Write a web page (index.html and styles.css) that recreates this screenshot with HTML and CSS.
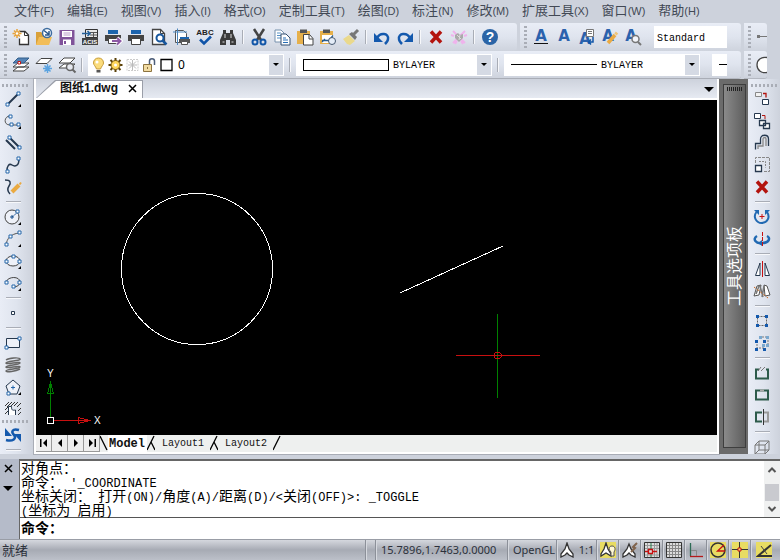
FILE: index.html
```html
<!DOCTYPE html>
<html lang="zh-CN">
<head>
    <meta charset="utf-8">
    <title>图纸1.dwg</title>
    <link rel="stylesheet" href="styles.css">
</head>
<body>
    <nav class="menu">
        <a href="#">文件<small>(F)</small></a>
        <a href="#">编辑<small>(E)</small></a>
        <a href="#">视图<small>(V)</small></a>
        <a href="#">插入<small>(I)</small></a>
        <a href="#">格式<small>(O)</small></a>
        <a href="#">定制工具<small>(T)</small></a>
        <a href="#">绘图<small>(D)</small></a>
        <a href="#">标注<small>(N)</small></a>
        <a href="#">修改<small>(M)</small></a>
        <a href="#">扩展工具<small>(X)</small></a>
        <a href="#">窗口<small>(W)</small></a>
        <a href="#">帮助<small>(H)</small></a>
    </nav>

    <!-- standard + text toolbars -->
    <div class="bar">
        <div class="group">
            <span class="grip"></span>
            <button aria-label="新建"><svg viewBox="0 0 20 20"><path d="M8.500 4.500h5.500l3.500 3.500v9.500h-9v-6" fill="#fff" stroke="#333" stroke-width="1.300"/><path d="M13.500 4.500v4h4" stroke="#333"/><path d="M6 2v9M1.500 6.500h9M3 3.500l6 6M9 3.500l-6 6" stroke="#e8a33a" stroke-width="1.500"/><circle cx="6" cy="6.500" r="1.300" fill="#fff"/></svg></button>
            <button aria-label="打开"><svg viewBox="0 0 20 20"><path d="M2 18V5h5l2 2h6v4" fill="#d9a13a"/><path d="M2 18l3-8h13l-3 8z" fill="#f2bd58"/><circle cx="13" cy="6" r="4.500" fill="#fff" stroke="#3d6c9f" stroke-width="1.500"/><path d="M10 3.500l5 4M15 4v4h-4" stroke="#28578b" stroke-width="1.500"/></svg></button>
            <button aria-label="保存"><svg viewBox="0 0 20 20"><path d="M2.500 3h15v15h-15z" fill="#80539a"/><path d="M5 4h10v6H5zM6 12.500h8V18H6z" fill="#fff"/><path d="M6.500 6h7M6.500 8h7" stroke="#b89ac8"/><path d="M7 14h2v3H7z" fill="#80539a"/></svg></button>
            <button aria-label="ACIS 输入"><svg viewBox="0 0 20 20"><path d="M5.500 2.500h12v8h-12z" fill="#e9e9e9" stroke="#333"/><path d="M10 5.500h7M10 8h7M13.500 5v5" stroke="#555"/><path d="M2 11h16v7H2z" fill="#444"/><path d="M2 6.500h8M7.500 4l2.500 2.500L7.500 9" stroke="#24609a" stroke-width="1.500"/><text x="10" y="17" font-size="6" font-weight="bold" text-anchor="middle" fill="#fff">ACIS</text></svg></button>
            <button aria-label="打印输出"><svg viewBox="0 0 20 20"><path d="M5 3h10v4H5z" fill="#1c64ad"/><path d="M2 8h16v6H2z" fill="#444"/><path d="M5.500 11.500h9v5h-9z" fill="#fff" stroke="#444"/><path d="M9 14h8M14 11l3.500 3-3.500 3.500" stroke="#fff" stroke-width="4"/><path d="M9 14h8M14 11l3.500 3-3.500 3.500" stroke="#8d5aa5" stroke-width="2"/></svg></button>
            <button aria-label="打印"><svg viewBox="0 0 20 20"><path d="M5 3h10v4H5z" fill="#1c64ad"/><path d="M2 8h16v6H2z" fill="#444"/><path d="M5.500 11.500h9v6h-9z" fill="#fff" stroke="#444"/></svg></button>
            <button aria-label="打印预览"><svg viewBox="0 0 20 20"><path d="M3.500 2.500h8l4 4v11h-12z" fill="#fff" stroke="#444" stroke-width="1.300"/><path d="M11.500 2.500v4h4" stroke="#444"/><circle cx="11" cy="11" r="3.500" fill="#fff" stroke="#17569d" stroke-width="2"/><path d="M13.500 13.500l4 4" stroke="#17569d" stroke-width="2.500"/></svg></button>
            <button aria-label="页面设置"><svg viewBox="0 0 20 20"><path d="M3.500 3.500h8l3 3v9h-11z" fill="#fff" stroke="#555"/><path d="M1 5h14M5.500 1.500V18" stroke="#4c86bd"/><path d="M8 10h9v2H8z" fill="#1c64ad"/><path d="M7 12h11v4H7z" fill="#555"/><path d="M9.500 14.500h6v3h-6z" fill="#fff" stroke="#555"/></svg></button>
            <button aria-label="拼写检查"><svg viewBox="0 0 20 20"><text x="10" y="8" font-size="8" font-weight="bold" text-anchor="middle" fill="#222">ABC</text><path d="M5 12.500l4 4 7-7" stroke="#1054a8" stroke-width="2.500"/></svg></button>
            <button aria-label="查找"><svg viewBox="0 0 20 20"><path d="M5 3h3v3h4V3h3v3l3 7v5h-6v-5H8v5H2v-5l3-7z" fill="#3b3b3b"/><path d="M4.500 15h2M13.500 15h2M7 7v4M13 7v4" stroke="#ddd"/></svg></button>
            <span class="sep"></span>
            <button aria-label="剪切"><svg viewBox="0 0 20 20"><path d="M5 2l7 11M15 2L8 13" stroke="#444" stroke-width="2.500"/><circle cx="6" cy="15" r="2.500" stroke="#1256a8" stroke-width="2"/><circle cx="14" cy="15" r="2.500" stroke="#1256a8" stroke-width="2"/></svg></button>
            <button aria-label="复制"><svg viewBox="0 0 20 20"><path d="M3 3h6l3 3v9H3z" fill="#fff" stroke="#7790ac"/><path d="M5 6h4M5 8.500h4M5 11h4" stroke="#5590c6"/><path d="M9 7h5l4 4v7H9z" fill="#fff" stroke="#334f70"/><path d="M11 11h3M11 13h5M11 15.500h5" stroke="#276db5"/></svg></button>
            <button aria-label="粘贴"><svg viewBox="0 0 20 20"><path d="M2 4h13v13H2z" fill="#e6b04b"/><path d="M5 2.500h7V6H5z" fill="#555"/><path d="M8.500 7.500h6l3.500 4v6.500H8.500z" fill="#fff" stroke="#444"/><path d="M14 7.500V12h4" stroke="#444"/></svg></button>
            <button aria-label="选择性粘贴"><svg viewBox="0 0 20 20"><path d="M2 4h13v13H2z" fill="#e6b04b"/><path d="M5 2.500h7V6H5z" fill="#555"/><path d="M4 8h10l3 3v5H4z" fill="#fff"/><path d="M4 13.500h7l4-5M4 15l3-3" stroke="#285c8f" stroke-width="1.300"/><circle cx="14" cy="14" r="3.500" fill="#e5edf8" stroke="#44576e"/></svg></button>
            <button aria-label="特性匹配"><svg viewBox="0 0 20 20"><path d="M2 12l6-4 6 6-5 4-3-1z" fill="#ead98c"/><path d="M8 7l3-2 5 5-2 3z" fill="#777"/><path d="M12 8l5-5" stroke="#777" stroke-width="3"/></svg></button>
            <span class="sep"></span>
            <button aria-label="放弃"><svg viewBox="0 0 20 20"><path d="M5 11C8 5 17 6 16 12c0 2-1 3-3 5" stroke="#1459ad" stroke-width="2.500"/><path d="M2 6v9h9z" fill="#1459ad"/></svg></button>
            <button aria-label="重做"><svg viewBox="0 0 20 20"><path d="M15 11C12 5 3 6 4 12c0 2 1 3 3 5" stroke="#1459ad" stroke-width="2.500"/><path d="M18 6v9H9z" fill="#1459ad"/></svg></button>
            <span class="sep"></span>
            <button aria-label="删除"><svg viewBox="0 0 20 20"><path d="M5 4.500l10 11M15 4.500l-10 11" stroke="#b3140e" stroke-width="3.500"/></svg></button>
            <button aria-label="清理"><svg viewBox="0 0 20 20"><path d="M4 4l12 12M16 4L4 16M2 8l3 1M18 8l-3 1M6 17l2-3M14 17l-2-3" stroke="#efb3ec" stroke-width="2"/><path d="M6 8l3-2 2 2 3-1v4l-4 4-4-4z" fill="#aaa"/><path d="M8 8l4 4M11 8l-1 5" stroke="#ddd"/></svg></button>
            <span class="sep"></span>
            <button aria-label="帮助"><svg viewBox="0 0 20 20"><circle cx="10" cy="10" r="8" fill="#2b64a6"/><text x="10" y="15" font-size="14" font-weight="bold" text-anchor="middle" fill="#fff">?</text></svg></button>
        </div>
        <div class="group wide">
            <span class="grip"></span>
            <button aria-label="多行文字"><svg viewBox="0 0 20 20"><text class="letter" x="10" y="14">A</text><path d="M3 16.500h14" stroke="#111"/></svg></button>
            <button aria-label="单行文字"><svg viewBox="0 0 20 20"><text class="letter" x="10" y="14">A</text></svg></button>
            <button aria-label="文字查找"><svg viewBox="0 0 20 20"><text class="letter" x="8" y="17">A</text><path d="M9.500 2.500h7v7h-7z" fill="#fff" stroke="#777"/><path d="M11 4.500h4M11 6.500h4" stroke="#777"/><path d="M16 10v5h-4M14 12.500L11.500 15l2.500 2.500" stroke="#1256a8" stroke-width="1.500"/></svg></button>
            <button aria-label="编辑文字"><svg viewBox="0 0 20 20"><text class="letter" x="8" y="14">A</text><path d="M8 16l7-8" stroke="#eaaa42" stroke-width="3.500"/><path d="M15.500 7.500l1.500-2" stroke="#f0c577" stroke-width="3"/></svg></button>
            <button aria-label="缩放文字"><svg viewBox="0 0 20 20"><text class="letter" x="8" y="14">A</text><circle cx="12.500" cy="12" r="3.500" fill="#f3f5fa" stroke="#777" stroke-width="1.500"/><path d="M15 15l3 3" stroke="#777" stroke-width="2"/></svg></button>
            <select class="style" aria-label="文字样式"><option>Standard</option></select>
        </div>
        <div class="group cut">
            <span class="grip"></span>
            <svg class="part" viewBox="0 0 14 20"><path d="M4 9.500h10" stroke="#777"/><path d="M4 8h3v3H4z" fill="#777"/></svg>
        </div>
    </div>

    <!-- layer and property toolbar -->
    <div class="bar props">
        <div class="group wide">
            <span class="grip"></span>
            <button aria-label="图层特性"><svg viewBox="0 0 20 20"><path d="M2 16l5-4h11l-5 4zM2 12l5-4h11l-5 4z" fill="#fff" stroke="#444"/><path d="M2 8l5-5h11l-5 5z" fill="#5583b5" stroke="#335f8c"/><path d="M7 6.500h2.500V9H7z" fill="#fff" stroke="#c9150f"/></svg></button>
            <button aria-label="冻结图层"><svg viewBox="0 0 20 20"><path d="M2 8.500l5-5h11l-5 5z" fill="#fff" stroke="#444"/><path d="M13.500 9v9M9 13.500h9M10.500 10.500l6 6M16.500 10.500l-6 6" stroke="#5ba3e0" stroke-width="1.500"/></svg></button>
            <button aria-label="图层浏览"><svg viewBox="0 0 20 20"><path d="M2 13l5-4h11l-5 4zM2 8l5-5h11l-5 5z" fill="#fff" stroke="#444"/><circle cx="13" cy="12" r="3.500" fill="#e5e8ef" stroke="#666" stroke-width="1.500"/><path d="M15.500 14.500l3 3" stroke="#666" stroke-width="2"/></svg></button>
            <span class="sep"></span>
            <div class="combo">
                <svg class="mini" viewBox="0 0 17 20"><path d="M8.500 3c3 0 5 2 5 5 0 2-2 3-3 6h-4c-1-3-3-4-3-6 0-3 2-5 5-5z" fill="#fbdc7c" stroke="#c79d3b"/><path d="M6.500 15h4v2.500h-4z" fill="#555"/><circle cx="7" cy="7" r="1.500" fill="#fff"/></svg>
                <svg class="mini" viewBox="0 0 17 20"><path d="M8.500 3v14M1.500 10h14M3.500 5l10 10M13.500 5l-10 10" stroke="#5a4108" stroke-width="2"/><circle cx="8.500" cy="10" r="4.500" fill="#ffd75c" stroke="#7a5a10"/><circle cx="8.500" cy="10" r="1.500" fill="#fff"/></svg>
                <svg class="mini" viewBox="0 0 17 20"><path d="M3 4.500h11v11H3z" stroke="#ccc" stroke-dasharray="2 1"/><path d="M8.500 5v10M4 10h9M5 6.500l7 7M12 6.500l-7 7" stroke="#bbb"/></svg>
                <svg class="mini" viewBox="0 0 17 20"><path d="M8.500 9V6c0-3 5-3 5 0v4" stroke="#4b5c78" stroke-width="1.500"/><path d="M2.500 9.500h8v7h-8z" fill="#f1dba2" stroke="#8c733f"/><path d="M6.500 12v2" stroke="#8c733f"/></svg>
                <svg class="mini" viewBox="0 0 17 20"><path d="M3 4.500h11v11H3z" fill="#fff" stroke="#000" stroke-width="1.300"/></svg>
                <select class="layer" aria-label="图层"><option>0</option></select>
                <span class="drop"></span>
            </div>
            <span class="sep"></span>
            <div class="combo">
                <span class="swatch"></span>
                <select aria-label="颜色"><option>BYLAYER</option></select>
                <span class="drop"></span>
            </div>
            <span class="sep"></span>
            <div class="combo">
                <span class="swatch line"></span>
                <select aria-label="线型"><option>BYLAYER</option></select>
                <span class="drop"></span>
            </div>
            <div class="combo short"><span class="swatch line"></span></div>
        </div>
        <div class="group cut">
            <span class="grip"></span>
            <svg class="part" viewBox="0 0 14 20"><path d="M14 2.500c-5-1-10 2-10 7.500s5 8.500 10 7.500" fill="#fff" stroke="#444" stroke-width="1.300"/></svg>
        </div>
    </div>

    <main>
        <div class="tools draw">
            <span class="hgrip"></span>
            <button aria-label="直线"><svg viewBox="0 0 20 20"><path d="M5 15L15 5" stroke="#26384e" stroke-width="2"/><path class="node" d="M14 3h3v3h-3zM3 14h3v3H3z"/><path class="more" d="M18 15v3h-3z"/></svg></button>
            <button aria-label="多段线"><svg viewBox="0 0 20 20"><path d="M7 5C1 5 0 14 7 14h8" stroke="#555"/><path class="node" d="M6 4h3v3H6zM14 12h3v3h-3zM7 12h3v3H7z"/><path class="more" d="M18 15v3h-3z"/></svg></button>
            <button aria-label="双线"><svg viewBox="0 0 20 20"><path d="M3 7l9 9M6 4l10 10" stroke="#26384e" stroke-width="2"/><path class="node" d="M5 3h3v3H5zM15 13h3v3h-3z"/></svg></button>
            <button aria-label="样条曲线"><svg viewBox="0 0 20 20"><path d="M4 16c0-5 2-8 5-6s7 1 7-6" stroke="#26384e" stroke-width="1.500"/><path class="node" d="M14 2h3v3h-3zM3 15h3v3H3z"/></svg></button>
            <button aria-label="徒手画"><svg viewBox="0 0 20 20"><path d="M2 3c6 0 6 3 4 6s-1 6 1 8" stroke="#26384e" stroke-width="1.500"/><path d="M9 15l7-7" stroke="#eaaa42" stroke-width="4"/><path d="M16.500 7.500l1.500-2" stroke="#eaaa42" stroke-width="2"/></svg></button>
            <span class="hsep"></span>
            <button aria-label="圆"><svg viewBox="0 0 20 20"><circle cx="9" cy="10" r="7" fill="#eef1f8" stroke="#444"/><path d="M9 10l6-5" stroke="#18508f" stroke-dasharray="2 1"/><path d="M7 10h4M9 8v4" stroke="#18508f"/><path class="node" d="M13 3h3v3h-3z"/><path class="more" d="M18 15v3h-3z"/></svg></button>
            <button aria-label="圆弧"><svg viewBox="0 0 20 20"><path d="M3 16C4 9 8 5 16 4" stroke="#555"/><path class="node" d="M2 14h3v3H2zM6 6h3v3H6zM15 2h3v3h-3z"/><path class="more" d="M18 15v3h-3z"/></svg></button>
            <button aria-label="椭圆"><svg viewBox="0 0 20 20"><ellipse cx="10" cy="10" rx="7" ry="5" fill="#eef1f8" stroke="#444"/><path class="node" d="M2 9h3v3H2zM15 9h3v3h-3zM9 4h3v3H9z"/><path class="more" d="M18 15v3h-3z"/></svg></button>
            <button aria-label="椭圆弧"><svg viewBox="0 0 20 20"><path d="M3 9c2-6 14-6 14 0 0 3-3 5-7 5" stroke="#444"/><path class="node" d="M2 8h3v3H2zM15 8h3v3h-3zM9 12h3v3H9z"/><path class="more" d="M18 15v3h-3z"/></svg></button>
            <span class="hsep"></span>
            <button aria-label="点"><svg viewBox="0 0 20 20"><path d="M8.500 8.500h3v3h-3z" fill="#fff" stroke="#26384e"/></svg></button>
            <span class="hsep"></span>
            <button aria-label="矩形"><svg viewBox="0 0 20 20"><path d="M3.500 5.500h13v9h-13z" fill="#eef1f8" stroke="#26384e"/><path class="node" d="M15 4h3v3h-3zM2 13h3v3H2z"/></svg></button>
            <button aria-label="螺旋"><svg viewBox="0 0 20 20"><path d="M3 5c3-2 13-3 14-1s-14 2-14 4 14-2 14 0-14 2-14 4 14-2 14 0-14 2-14 4 10 0 14-2" stroke="#666" stroke-width="1.500"/></svg></button>
            <button aria-label="多边形"><svg viewBox="0 0 20 20"><path d="M10 3l7 6-3 8H6L3 9z" fill="#eef1f8" stroke="#26384e"/><path d="M8 10.500h4M10 8.500v4" stroke="#2566aa"/><path class="node" d="M4 15h3v3H4z"/><path class="more" d="M18 15v3h-3z"/></svg></button>
            <button aria-label="填充"><svg viewBox="0 0 20 20"><path d="M2 7l4-4M4 8l5-5M8 7l4-4M11 7l4-4M14 8l4-4M2 11l3-3M2 15l3-3M15 12l3-3M15 16l3-3" stroke="#333"/><path d="M5.500 16V7.500h3c0 4 1 4 4 3.500v5" fill="#fff" stroke="#26384e"/></svg></button>
            <span class="hgrip tight"></span>
            <button aria-label="刷新"><svg viewBox="0 0 20 20"><path d="M16 5C9 3 8 7 11 10s-1 7-8 5" stroke="#1459ad" stroke-width="2.500"/><path d="M2 3v8h7zM18 17V9h-7z" fill="#1459ad"/></svg></button>
            <span class="hsep"></span>
        </div>

        <section class="doc">
            <div class="tabs">
                <div class="tab"><b>图纸1.dwg</b><button aria-label="关闭"><svg viewBox="0 0 9 9"><path d="M1 1l7 7M8 1L1 8" stroke="#000" stroke-width="1.500"/></svg></button></div>
                <button class="list" aria-label="文档列表"></button>
            </div>
            <svg class="canvas">
                <circle cx="161" cy="169" r="75.500" stroke="#fff"/>
                <path d="M364 193l103-47" stroke="#fff"/>
                <path d="M461.500 214v84" stroke="#008000"/>
                <path d="M420 255.500h84M459.500 252.500h4l1.500 1.500v3l-1.500 1.500h-4l-1.500-1.500v-3z" stroke="#c81010"/>
                <path d="M14.500 317v-35M11.500 293.500h6l-3-11z" stroke="#008000"/>
                <path d="M18 320.500h35M42.500 317.500v6l11-3z" stroke="#c81010"/>
                <path d="M11.500 317.500h6v6h-6z" stroke="#fff"/>
                <text x="11" y="277">Y</text>
                <text x="58" y="324">X</text>
            </svg>
            <div class="sheets">
                <button class="nav" aria-label="第一个"><svg viewBox="0 0 10 10"><path d="M1 1h1.500v8H1zM8 1v8L4 5z" fill="#000"/></svg></button>
                <button class="nav" aria-label="上一个"><svg viewBox="0 0 10 10"><path d="M7 1v8L3 5z" fill="#000"/></svg></button>
                <button class="nav" aria-label="下一个"><svg viewBox="0 0 10 10"><path d="M3 1v8l4-4z" fill="#000"/></svg></button>
                <button class="nav" aria-label="最后一个"><svg viewBox="0 0 10 10"><path d="M7.500 1H9v8H7.500zM2 1v8l4-4z" fill="#000"/></svg></button>
                <svg class="slant" viewBox="0 0 8 16"><path d="M0 1l7 14" stroke="#000" stroke-width="1.300"/></svg>
                <button class="sheet on">Model</button>
                <svg class="slant" viewBox="0 0 8 16"><path d="M0 15L7 1M4 7l4 8" stroke="#000" stroke-width="1.300"/></svg>
                <button class="sheet">Layout1</button>
                <svg class="slant" viewBox="0 0 8 16"><path d="M0 15L7 1M4 7l4 8" stroke="#000" stroke-width="1.300"/></svg>
                <button class="sheet">Layout2</button>
                <svg class="slant" viewBox="0 0 8 16"><path d="M0 15L7 1" stroke="#000" stroke-width="1.300"/></svg>
            </div>
        </section>

        <aside class="palette"><div class="handle"><i></i><span>工具选项板</span></div></aside>

        <div class="tools modify">
            <span class="hgrip"></span>
            <button aria-label="复制对象"><svg viewBox="0 0 20 20"><path d="M3.500 3.500h6v4h-6z" fill="#f2f2f2" stroke="#888"/><path d="M11 4.500h3v4" stroke="#b3140e" stroke-width="1.300"/><path d="M10.500 10.500h6v5h-6z" fill="#fff" stroke="#26384e"/></svg></button>
            <button aria-label="多重复制"><svg viewBox="0 0 20 20"><path d="M2.500 2.500h6v5h-6z" fill="#fff" stroke="#26384e"/><path d="M10 4.500h3V8" stroke="#b3140e"/><path d="M7.500 9.500h6v5h-6zM11.500 12.500h6v5h-6z" fill="#fff" stroke="#26384e" stroke-width="1.300"/></svg></button>
            <button aria-label="偏移"><svg viewBox="0 0 20 20"><path d="M3.500 16.500v-6h5V6c0-5 8-5 8 0v7" stroke="#26384e" stroke-width="1.300"/><path d="M6 16v-3h5V6c0-2 3-2 3 0v7" stroke="#888" stroke-width="1.300"/></svg></button>
            <button aria-label="缩放"><svg viewBox="0 0 20 20"><path d="M3.500 8V2.500h14v14H11" stroke="#888" stroke-dasharray="3 1"/><path d="M7 6.500h6.500v6" stroke="#888" stroke-dasharray="2 1"/><path d="M3.500 10.500h6v6h-6z" fill="#fff" stroke="#26384e" stroke-width="1.300"/></svg></button>
            <button aria-label="删除对象"><svg viewBox="0 0 20 20"><path d="M5 4.500l10 11M15 4.500l-10 11" stroke="#b3140e" stroke-width="3.500"/></svg></button>
            <span class="hsep"></span>
            <button aria-label="旋转"><svg viewBox="0 0 20 20"><path d="M4.500 5c-4 5 0 11 5 11 6 0 9-6 5.500-11" stroke="#2169b2" stroke-width="2"/><path d="M2 3h5v5zM18 3h-5v5z" fill="#2169b2"/><path d="M7.500 9.500h5M10 7v5" stroke="#c81010"/></svg></button>
            <button aria-label="三维旋转"><svg viewBox="0 0 20 20"><path d="M5 7c-5 3-1 8 5 7 7 0 9-5 5-7" stroke="#2169b2" stroke-width="2.500"/><path d="M10 11v6l-4-3z" fill="#2169b2"/><path d="M10.500 3v14" stroke="#c81010" stroke-dasharray="4 1"/></svg></button>
            <span class="hsep"></span>
            <button aria-label="镜像"><svg viewBox="0 0 20 20"><path d="M8 4v12.500H3.500zM13 4v12.500h4.500z" fill="#fff" stroke="#26384e"/><path d="M10.500 2v16" stroke="#c81010"/></svg></button>
            <button aria-label="三维镜像"><svg viewBox="0 0 20 20"><path d="M5 5l4-1-2 10-5 1zM12 4l3 1 3 9-5 1z" fill="#fff" stroke="#555"/><path d="M8 5l3 11M12 5l-2 11M4 13l3-8" stroke="#777" stroke-width="1.500"/><path d="M2 6l14 11" stroke="#d2691e" stroke-dasharray="2 2"/></svg></button>
            <span class="hsep"></span>
            <button aria-label="编辑夹点"><svg viewBox="0 0 20 20"><path d="M5.500 5.500h9v9h-9z" stroke="#666" stroke-dasharray="2 1"/><path d="M4 4h3v3H4zM13 4h3v3h-3zM4 13h3v3H4zM13 13h3v3h-3z" fill="#1459ad"/></svg></button>
            <button aria-label="阵列"><svg viewBox="0 0 20 20"><path d="M5 8v7h7M10 4h6v8" stroke="#777" stroke-dasharray="2 1"/><path d="M7 3h3v3H7zM14 3h3v3h-3zM14 11h3v3h-3zM10 11h3v3h-3z" fill="#7ba8ce"/><path d="M3 7h3v3H3zM11 7h3v3h-3zM3 15h3v3H3zM11 15h3v3h-3z" fill="#1459ad"/></svg></button>
            <span class="hsep"></span>
            <button aria-label="打断"><svg viewBox="0 0 20 20"><path d="M7 6.500H4v9h12v-9h-2" stroke="#2d5b4b" stroke-width="2"/><path d="M6 8l3-4M9 8l4-4" stroke="#777"/></svg></button>
            <button aria-label="打断于点"><svg viewBox="0 0 20 20"><path d="M4 5.500h12v9H4z" stroke="#2d5b4b" stroke-width="2"/><path d="M8 5.500h4" stroke="#aaa" stroke-width="2"/></svg></button>
            <button aria-label="合并"><svg viewBox="0 0 20 20"><path d="M10 5.500H4v9h6" stroke="#2d5b4b" stroke-width="2"/><path d="M12 5.500h4v9h-4" stroke="#999" stroke-width="2"/><path d="M11.500 2v16" stroke="#333"/></svg></button>
            <span class="hsep"></span>
            <button aria-label="立方体"><svg viewBox="0 0 20 20"><path d="M3 8h10v9H3zM3 8l4-4h10v9l-4 4M13 8l4-4M7 4v9L3 17M7 13h10" stroke="#777"/></svg></button>
        </div>
    </main>

    <div class="command">
        <div class="side">
            <button aria-label="关闭命令栏"><svg viewBox="0 0 9 9"><path d="M1 1l7 7M8 1L1 8" stroke="#000" stroke-width="1.500"/></svg></button>
            <button class="list" aria-label="命令栏选项"></button>
        </div>
        <div class="console">
            <div class="history">
                <div class="log">
                    <p>对角点：</p>
                    <p>命令：<span> '_COORDINATE</span></p>
                    <p>坐标关闭：<span> </span>打开<span>(ON)/</span>角度<span>(A)/</span>距离<span>(D)/&lt;</span>关闭<span>(OFF)&gt;: _TOGGLE</span></p>
                    <p><span>(</span>坐标为<span> </span>启用<span>)</span></p>
                </div>
                <div class="scroll">
                    <svg viewBox="0 0 10 8"><path d="M1.500 6L5 2.500 8.500 6" stroke="#555" stroke-width="2"/></svg>
                    <i></i>
                    <svg viewBox="0 0 10 8"><path d="M1.500 2L5 5.500 8.500 2" stroke="#555" stroke-width="2"/></svg>
                </div>
            </div>
            <div class="prompt"><label for="cmd">命令：</label><input id="cmd" type="text"></div>
        </div>
    </div>

    <footer>
        <span class="ready">就绪</span>
        <span class="blank"></span>
        <span class="coords">15.7896,1.7463,0.0000</span>
        <span class="gl">OpenGL</span>
        <button class="scale"><svg viewBox="0 0 16 16"><path d="M8 1l2 6 4 5v3l-4-2-2-2-2 2-4 2v-3l4-5z" fill="#fff" stroke="#333" stroke-width="1.300"/></svg>1:1</button>
        <button class="on" aria-label="注释可见"><svg viewBox="0 0 16 16"><path d="M6 1l2 6 3 5v2l-5-3-5 3v-2l3-5z" fill="#fff" stroke="#333" stroke-width="1.300"/><path d="M12 4c3 0 4 3 2 6v4h-3v-4c-3-3-2-6 1-6z" fill="#fff8d5" stroke="#555"/></svg></button>
        <button aria-label="自动缩放"><svg viewBox="0 0 16 16"><path d="M7 2l2 5 4 5v3l-4-2-2-2-2 2-4 2v-3l4-5z" fill="#fff" stroke="#333" stroke-width="1.300"/><path d="M15 1l-4 4 2 1-4 4" stroke="#80634c" stroke-width="2"/></svg></button>
        <button aria-label="捕捉"><svg viewBox="0 0 16 16"><path d="M.5.500h15v15H.5z" fill="#ddd" stroke="#333"/><path d="M3.500 1v14M10.500 1v14M13 1v14M1 3.500h14M1 6.500h14M1 13h14" stroke="#999"/><path d="M7 1v6M7 12v3" stroke="#267a4b"/><path d="M1 9.500h3M9 9.500h4M4.500 7.500h4v4h-4z" stroke="#c81010" stroke-width="1.300"/></svg></button>
        <button aria-label="栅格"><svg viewBox="0 0 16 16"><path d="M.5.500h15v15H.5z" fill="#ddd" stroke="#333"/><path d="M3.500 1v14M6.500 1v14M9.500 1v14M12.500 1v14M1 3.500h14M1 6.500h14M1 9.500h14M1 12.500h14" stroke="#888"/></svg></button>
        <button aria-label="正交"><svg viewBox="0 0 16 16"><path d="M2.500 1v13" stroke="#2d6b55" stroke-width="1.300"/><path d="M2 14.500h13" stroke="#b51a1a" stroke-width="1.300"/><path d="M3 8.500h5.500V14" stroke="#888"/></svg></button>
        <button class="on" aria-label="极轴"><svg viewBox="0 0 16 16"><circle cx="8" cy="8" r="7" stroke="#333" stroke-width="1.500"/><path d="M14 3L7.500 9H15" stroke="#c81010" stroke-width="1.300"/></svg></button>
        <button class="on" aria-label="对象捕捉"><svg viewBox="0 0 16 16"><path d="M0 7.500h16M7.500 0v16" stroke="#333"/><path d="M6 6h3v3H6z" fill="#f4dc78" stroke="#c81010"/></svg></button>
        <button class="on last" aria-label="对象追踪"><svg viewBox="0 0 16 16"><path d="M15 3L2 14h14" stroke="#333" stroke-width="2"/><path d="M5 4l6 8" stroke="#444"/></svg></button>
    </footer>
</body>
</html>
```

FILE: styles.css
```css
* { box-sizing: border-box; }
body { margin: 0; height: 100vh; display: flex; flex-direction: column; background: #cdd2dc; color: #111; font: 12px/16px "Liberation Sans", "Noto Sans CJK SC", sans-serif; overflow: hidden; }
svg { display: block; fill: none; }
button { border: 0; padding: 0; background: none; font: inherit; color: inherit; display: flex; align-items: center; justify-content: center; flex: none; }
select, input { border: 0; padding: 0; margin: 0; background: #fff; appearance: none; border-radius: 0; outline: none; }
select { font: 10px/16px "Liberation Mono", monospace; color: #000; }

.menu { display: flex; gap: 13px; height: 23px; padding: 2px 0 0 14px; font-size: 13px; line-height: 18px; flex: none; }
.menu a { color: #424955; text-decoration: none; white-space: nowrap; }
.menu small { font-size: 11px; }

/* toolbars */
.bar { display: flex; height: 28px; flex: none; }
.group { display: flex; align-items: center; padding: 0 16px 0 4px; border-radius: 0 3px 3px 0; background: linear-gradient(#e9edf6, #dfe4ee 50%, #ced3dd); }
.group + .group { margin-left: 3px; }
.group.wide { padding-right: 14px; flex: 1; }
.group.cut { padding-right: 0; margin-right: 13px; }
.grip { width: 3px; height: 22px; margin-right: 2px; flex: none; background: repeating-linear-gradient(#a9adb6 0 2px, transparent 2px 4px); }
.bar button { width: 23px; height: 24px; }
.bar button svg { width: 20px; height: 20px; }
.sep { width: 2px; height: 14px; margin: 0 3px; flex: none; background: #a9adb6; border-right: 1px solid #f7f8fb; }
.letter { font: bold 15px "DejaVu Sans", sans-serif; fill: #2b62ad; text-anchor: middle; }
.style { width: 73px; height: 22px; margin-left: 10px; padding: 3px 0 0 3px; }
.part { width: 14px; height: 20px; }
.props .group { border-bottom: 1px solid #b4b8c1; }
.combo { display: flex; align-items: center; width: 196px; height: 22px; margin: 0 2px; padding: 0 1px 0 2px; background: #fff; flex: none; }
.combo select { flex: 1; min-width: 0; height: 20px; padding-top: 3px; }
.combo .layer { padding: 0 0 0 3px; font: 12px/16px "Noto Sans", sans-serif; }
.mini { width: 17px; height: 20px; flex: none; }
.drop { width: 14px; height: 20px; flex: none; background: #d5dae4; display: flex; align-items: center; justify-content: center; pointer-events: none; }
.drop::after, .list::after { content: ""; border: 3px solid transparent; border-top-color: #000; border-bottom: 0; }
.swatch { width: 86px; height: 12px; margin: 0 4px 0 5px; border: 1px solid #000; flex: none; }
.swatch.line { height: 1px; border-width: 1px 0 0; }
.combo.short { width: 15px; margin-left: 10px; margin-right: 0; padding: 0; }
.short .swatch.line { width: 8px; margin-left: 7px; margin-right: 0; }

main { display: flex; flex: 1; min-height: 0; margin-bottom: 5px; }
.tools { display: flex; flex-direction: column; overflow: hidden; flex: none; background: linear-gradient(90deg, #e9edf6, #dfe4ee 50%, #cdd2dc); }
.draw { width: 33px; padding-left: 1px; }
.modify { width: 32px; padding-left: 2px; }
.tools button { width: 24px; height: 22px; }
.tools svg { width: 20px; height: 20px; }
.hgrip { height: 3px; margin: 5px 3px 1px 1px; flex: none; background: repeating-linear-gradient(90deg, #a9adb6 0 2px, transparent 2px 4px); }
.hgrip.tight { margin: 0 3px 1px 1px; }
.hsep { width: 15px; height: 2px; margin: 3px 5px; flex: none; background: #a9adb6; border-bottom: 1px solid #f7f8fb; }
.node { fill: #fff; stroke: #2566aa; }
.more { fill: #000; }

.doc { display: flex; flex-direction: column; flex: 1; min-width: 0; border: solid #fff; border-width: 0 2px 2px; margin-left: 1px; outline: 1px solid #a9adb6; }
.tabs { display: flex; justify-content: space-between; height: 21px; padding: 1px 2px 0 0; flex: none; border-bottom: 2px solid #fff; background: linear-gradient(#cdd2dc, #e6eaf2); }
.tab { display: flex; align-items: center; gap: 10px; padding: 0 6px 2px 24px; position: relative; z-index: 0; background: #9a9ea8; clip-path: polygon(19px 0, 100% 0, 100% 100%, 0 100%); }
.tab::before { content: ""; position: absolute; z-index: -1; inset: 1px 1px 0; background: #fff; clip-path: polygon(19px 0, 100% 0, 100% 100%, 0 100%); }
.tab b { line-height: 16px; }
.tab svg, .side svg { width: 9px; height: 9px; }
.list { width: 13px; }
.list::after { border-width: 5px 5px 0; }
.canvas { flex: 1; width: 100%; min-height: 0; background: #000; shape-rendering: crispEdges; }
.canvas text { font-size: 10px; fill: #fff; }
.sheets { display: flex; height: 17px; flex: none; background: #eef0ef; font: 10px/16px "Liberation Mono", monospace; }
.nav { width: 16px; background: #eee; border: solid #999; border-width: 0 1px 1px 0; }
.nav svg { width: 10px; height: 10px; }
.slant { width: 8px; height: 16px; flex: none; }
.sheet { padding: 0 6px 0 7px; }
.sheet.on { padding: 0 2px 0 1px; background: #fff; font-size: 12px; font-weight: bold; }

.palette { width: 29px; padding: 5px 2px 6px 4px; flex: none; background: #6b6b6b; }
.handle { display: flex; flex-direction: column; align-items: center; justify-content: center; height: 100%; position: relative; border: 1px solid #3e3e3e; background: linear-gradient(90deg, #8a8a8a, #5e5e5e); }
.handle i { position: absolute; top: 2px; left: 3px; right: 3px; height: 4px; background: repeating-linear-gradient(90deg, #222 0 1px, transparent 1px 2px); }
.handle span { color: #fff; font-size: 16px; line-height: 20px; white-space: nowrap; writing-mode: vertical-rl; text-orientation: sideways; transform: rotate(180deg); }

/* command line */
.command { display: flex; flex: none; background: #b5bbc9; }
.side { width: 19px; display: flex; flex-direction: column; align-items: center; gap: 9px; padding: 5px 3px 0 0; flex: none; }
.side .list { height: 12px; }
.console { flex: 1; min-width: 0; border: solid #666; border-width: 2px 0 0 1px; background: #fff; }
.history { display: flex; justify-content: space-between; border-bottom: 1px solid #555; }
.log { font-size: 14px; line-height: 14px; color: #000; padding-left: 1px; }
.log p { margin: 0; height: 14px; white-space: pre; }
.log span { font: 12px/14px "Liberation Mono", monospace; }
.scroll { display: flex; flex-direction: column; justify-content: space-between; align-items: center; width: 16px; padding: 5px 0 4px; background: #f0f1f1; }
.scroll svg { width: 10px; height: 8px; }
.scroll i { width: 14px; height: 17px; margin-top: 5px; background: #c9cacf; }
.prompt { display: flex; height: 21px; padding-left: 1px; font-size: 14px; line-height: 20px; font-weight: bold; color: #000; }
.prompt input { flex: 1; font: 12px "Liberation Mono", monospace; }

footer { display: flex; height: 21px; flex: none; font: 11px/20px "Noto Sans", "Noto Sans CJK SC", sans-serif; color: #2c313b; background: linear-gradient(#d5d8de, #a7abb4 50%, #bcc0c9); border-top: 1px solid #999da6; }
footer > * { border-right: 1px solid #8c9099; box-shadow: 1px 0 #d6d9df; }
.ready { flex: 1; padding-left: 2px; font-size: 13px; }
.blank { width: 10px; }
.coords { width: 132px; padding-left: 5px; }
.gl { width: 49px; padding-left: 5px; }
footer button { width: 22px; }
footer svg { width: 16px; height: 16px; }
footer .scale { width: 40px; gap: 4px; }
footer .on svg { background: #e8dc62; }
footer .last { width: 29px; justify-content: flex-start; padding-left: 5px; border: 0; }
```
